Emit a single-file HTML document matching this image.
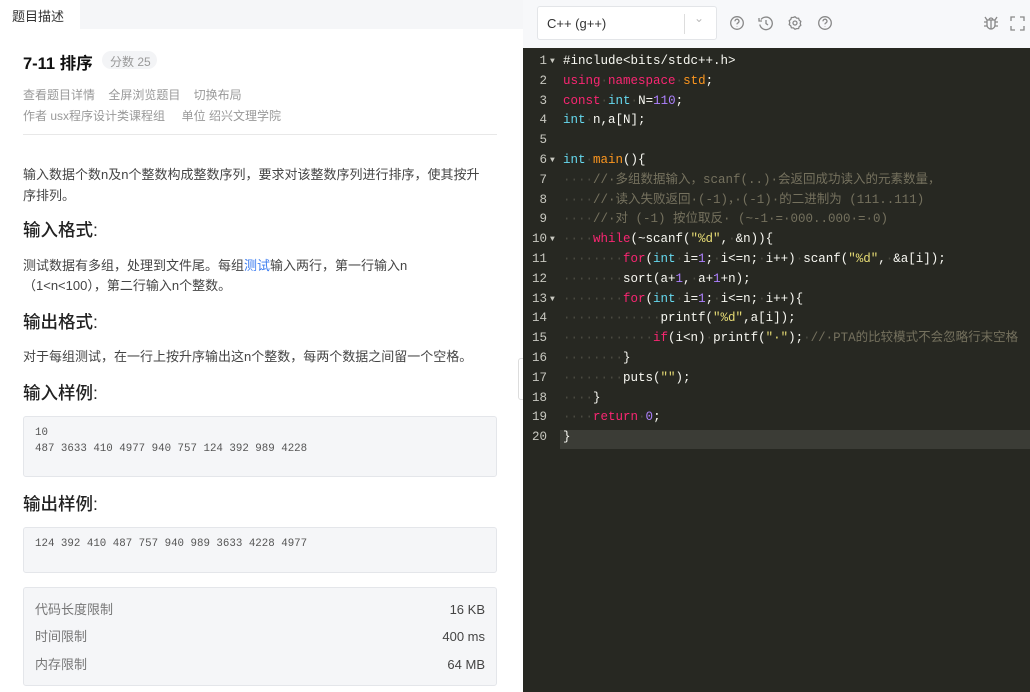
<!DOCTYPE html>
<html><head><meta charset="utf-8"><style>
*{margin:0;padding:0;box-sizing:border-box}
body{width:1030px;height:692px;overflow:hidden;font-family:"Liberation Sans","Noto Sans CJK SC",sans-serif;background:#fff;position:relative}
.left{position:absolute;left:0;top:0;width:523px;height:692px;background:#fff}
.tabs{height:29px;background:#f5f6f8;position:relative}
.tab{position:absolute;left:0;top:0;width:80px;height:29px;background:#fff;font-size:13px;color:#333;padding:6px 0 0 12px}
.abs{position:absolute;white-space:nowrap}
.g{color:#999;font-size:12px}
.h{font-size:17.5px;color:#222;font-weight:500}
.p{font-size:13px;color:#444}
.box{position:absolute;left:23px;width:474px;background:#f5f6f8;border:1px solid #e4e6ea;border-radius:3px}
.mono{font-family:"Liberation Mono",monospace;font-size:10.8px;color:#555}
.right{position:absolute;left:523px;top:0;width:507px;height:692px;background:#272822}
.tb{position:absolute;left:0;top:0;width:507px;height:48px;background:#f7f8fa}
.code{position:absolute;left:0;top:52px;width:507px;font-family:"Liberation Mono","Noto Sans CJK SC",monospace;font-size:12.5px;line-height:19.8px;color:#f8f8f2}
.ln{position:relative;height:19.8px;white-space:pre}
.num{position:absolute;left:0;width:24px;text-align:right;color:#c8c8c0}
.fold{position:absolute;left:27px;top:0;font-size:8px;color:#c8c8c0}
.t{position:absolute;left:40px}
.k{color:#f92672}.y{color:#66d9ef}.o{color:#fd971f}.n{color:#ae81ff}.s{color:#e6db74}.c{color:#75715e}.d{color:#4b4b42}
.lim{position:absolute;font-size:13px;line-height:16px}
</style></head><body>
<div class="left">
<div class="tabs"><div class="tab">题目描述</div></div>
<div class="abs" style="left:23px;top:50px;font-size:16.5px;color:#111;font-weight:bold">7-11 排序</div>
<div class="abs" style="left:102px;top:51px;height:18px;width:55px;border-radius:9px;background:#f3f4f6;font-size:12px;color:#999;padding:2px 0 0 8px">分数 25</div>
<div class="abs g" style="left:23px;top:86px">查看题目详情&nbsp;&nbsp;&nbsp;&nbsp;全屏浏览题目&nbsp;&nbsp;&nbsp;&nbsp;切换布局</div>
<div class="abs g" style="left:23px;top:107px">作者 usx程序设计类课程组&nbsp;&nbsp;&nbsp;&nbsp;&nbsp;单位 绍兴文理学院</div>
<div class="abs" style="left:23px;top:134px;width:474px;height:1px;background:#e8e8e8"></div>
<div class="abs p" style="left:23px;top:164px;line-height:21px">输入数据个数n及n个整数构成整数序列，要求对该整数序列进行排序，使其按升<br>序排列。</div>
<div class="abs h" style="left:23px;top:217px">输入格式:</div>
<div class="abs p" style="left:23px;top:256px;line-height:20px">测试数据有多组，处理到文件尾。每组<span style="color:#3b7cf0">测试</span>输入两行，第一行输入n<br>（1&lt;n&lt;100），第二行输入n个整数。</div>
<div class="abs h" style="left:23px;top:309px">输出格式:</div>
<div class="abs p" style="left:23px;top:346px">对于每组测试，在一行上按升序输出这n个整数，每两个数据之间留一个空格。</div>
<div class="abs h" style="left:23px;top:380px">输入样例:</div>
<div class="box" style="top:416px;height:61px"><div class="mono" style="position:absolute;left:11px;top:8px;line-height:16px">10<br>487 3633 410 4977 940 757 124 392 989 4228</div></div>
<div class="abs h" style="left:23px;top:491px">输出样例:</div>
<div class="box" style="top:527px;height:46px"><div class="mono" style="position:absolute;left:11px;top:8px;line-height:16px">124 392 410 487 757 940 989 3633 4228 4977</div></div>
<div class="box" style="top:587px;height:99px">
<div class="lim" style="left:11px;top:14px;color:#777">代码长度限制</div><div class="lim" style="right:11px;top:14px;color:#444">16 KB</div>
<div class="lim" style="left:11px;top:41px;color:#777">时间限制</div><div class="lim" style="right:11px;top:41px;color:#444">400 ms</div>
<div class="lim" style="left:11px;top:69px;color:#777">内存限制</div><div class="lim" style="right:11px;top:69px;color:#444">64 MB</div>
</div>
</div>
<div class="abs" style="left:518px;top:358px;width:9px;height:42px;background:#fff;border:1px solid #ddd;border-radius:3px"></div>
<div class="right">
<div class="tb">
<div class="abs" style="left:14px;top:6px;width:180px;height:34px;background:#fff;border:1px solid #e3e5e8;border-radius:3px;font-size:13px;color:#333;padding:9px 0 0 9px">C++ (g++)<span style="position:absolute;left:146px;top:7px;width:1px;height:20px;background:#ddd"></span><span style="position:absolute;left:156px;top:4px;color:#bbb;font-size:12px">&#8964;</span></div>
<svg class="abs" style="left:206px;top:15px" width="110" height="16" fill="none" stroke="#888" stroke-width="1.3">
<circle cx="8" cy="8" r="6.3"/><path d="M6 6.3a2 2 0 1 1 2.6 1.8c-.6.3-.6.7-.6 1.3M8 11.3v.3"/>
<path d="M32 4.5a6.3 6.3 0 1 1-1.2 5M30 3v3h3M37 5v3.5l2 1.5"/>
<circle cx="66" cy="8" r="2"/><path d="M66 1.8l1.6 1.3 2 .1.6 1.9 1.6 1.3-.6 2 .6 1.9-1.6 1.3-.6 1.9-2 .1L66 14.2l-1.6-1.3-2-.1-.6-1.9-1.6-1.3.6-1.9-.6-2 1.6-1.3.6-1.9 2-.1z"/>
<circle cx="96" cy="8" r="6.3"/><path d="M94 6.3a2 2 0 1 1 2.6 1.8c-.6.3-.6.7-.6 1.3M96 11.3v.3"/>
</svg>
<svg class="abs" style="left:460px;top:15px" width="45" height="16" fill="none" stroke="#888" stroke-width="1.3">
<path d="M4 5h8v5a4 4 0 0 1-8 0zM8 5v9M6 5a2 2 0 0 1 4 0M1 7h3M12 7h3M1 11h3M12 11h3M2 2l2 3M14 2l-2 3"/>
<path d="M28 6V2h4M37 2h4v4M41 11v4h-4M32 15h-4v-4"/>
</svg>
</div>
<div class="abs" style="left:37px;top:429.6px;width:470px;height:19.8px;background:#3b3c36"></div>
<div class="code">
<div class="ln"><span class="num">1</span><span class="fold">▼</span><span class="t">#include&lt;bits/stdc++.h&gt;</span></div>
<div class="ln"><span class="num">2</span><span class="t"><span class="k">using</span><span class="d">·</span><span class="k">namespace</span><span class="d">·</span><span class="o">std</span>;</span></div>
<div class="ln"><span class="num">3</span><span class="t"><span class="k">const</span><span class="d">·</span><span class="y">int</span><span class="d">·</span>N=<span class="n">110</span>;</span></div>
<div class="ln"><span class="num">4</span><span class="t"><span class="y">int</span><span class="d">·</span>n,a[N];</span></div>
<div class="ln"><span class="num">5</span></div>
<div class="ln"><span class="num">6</span><span class="fold">▼</span><span class="t"><span class="y">int</span><span class="d">·</span><span class="o">main</span>(){</span></div>
<div class="ln"><span class="num">7</span><span class="t"><span class="d">····</span><span class="c">//·多组数据输入，scanf(..)·会返回成功读入的元素数量，</span></span></div>
<div class="ln"><span class="num">8</span><span class="t"><span class="d">····</span><span class="c">//·读入失败返回·(-1)，·(-1)·的二进制为 (111..111)</span></span></div>
<div class="ln"><span class="num">9</span><span class="t"><span class="d">····</span><span class="c">//·对 (-1) 按位取反· (~-1·=·000..000·=·0)</span></span></div>
<div class="ln"><span class="num">10</span><span class="fold">▼</span><span class="t"><span class="d">····</span><span class="k">while</span>(~scanf(<span class="s">"%d"</span>,<span class="d">·</span>&amp;n)){</span></div>
<div class="ln"><span class="num">11</span><span class="t"><span class="d">········</span><span class="k">for</span>(<span class="y">int</span><span class="d">·</span>i=<span class="n">1</span>;<span class="d">·</span>i&lt;=n;<span class="d">·</span>i++)<span class="d">·</span>scanf(<span class="s">"%d"</span>,<span class="d">·</span>&amp;a[i]);</span></div>
<div class="ln"><span class="num">12</span><span class="t"><span class="d">········</span>sort(a+<span class="n">1</span>,<span class="d">·</span>a+<span class="n">1</span>+n);</span></div>
<div class="ln"><span class="num">13</span><span class="fold">▼</span><span class="t"><span class="d">········</span><span class="k">for</span>(<span class="y">int</span><span class="d">·</span>i=<span class="n">1</span>;<span class="d">·</span>i&lt;=n;<span class="d">·</span>i++){</span></div>
<div class="ln"><span class="num">14</span><span class="t"><span class="d">·············</span>printf(<span class="s">"%d"</span>,a[i]);</span></div>
<div class="ln"><span class="num">15</span><span class="t"><span class="d">············</span><span class="k">if</span>(i&lt;n)<span class="d">·</span>printf(<span class="s">"·"</span>);<span class="d">·</span><span class="c">//·PTA的比较模式不会忽略行末空格</span></span></div>
<div class="ln"><span class="num">16</span><span class="t"><span class="d">········</span>}</span></div>
<div class="ln"><span class="num">17</span><span class="t"><span class="d">········</span>puts(<span class="s">""</span>);</span></div>
<div class="ln"><span class="num">18</span><span class="t"><span class="d">····</span>}</span></div>
<div class="ln"><span class="num">19</span><span class="t"><span class="d">····</span><span class="k">return</span><span class="d">·</span><span class="n">0</span>;</span></div>
<div class="ln"><span class="num">20</span><span class="t">}</span></div>
</div>
</div>
</body></html>
